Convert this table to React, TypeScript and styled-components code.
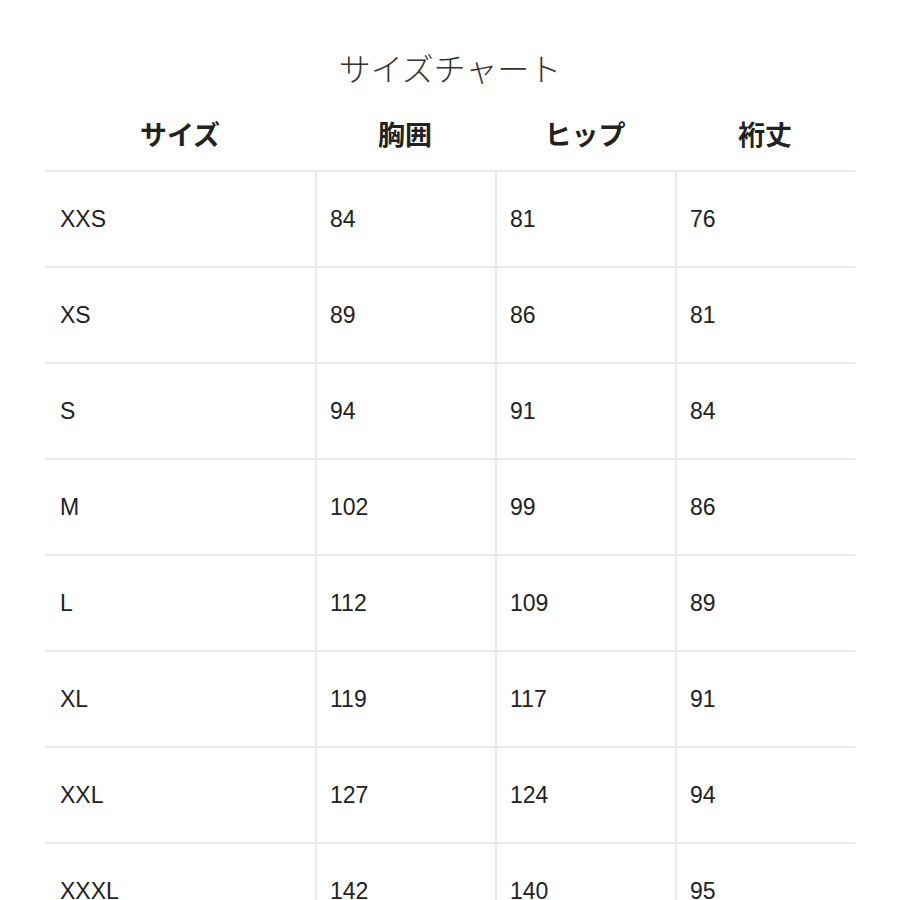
import styled, { createGlobalStyle } from 'styled-components'

const GlobalStyle = createGlobalStyle`
  html, body {
    margin: 0;
    padding: 0;
    background: #ffffff;
  }
  body {
    font-family: "Liberation Sans", "Noto Sans CJK JP", sans-serif;
    color: #222;
  }
`

const Page = styled.div`
  width: 900px;
  height: 900px;
  overflow: hidden;
  padding-top: 43px;
  box-sizing: border-box;
`

const Title = styled.h2`
  margin: 0;
  height: 48px;
  line-height: 48px;
  text-align: center;
  font-family: "Noto Sans CJK JP", sans-serif;
  font-weight: 300;
  font-size: 32px;
  color: #333;
`

const Table = styled.div`
  margin-left: 45px;
  width: 810px;
  display: grid;
  grid-template-columns: 270px 180px 180px 180px;
`

const HeadCell = styled.div`
  height: 79px;
  display: flex;
  align-items: center;
  justify-content: center;
  padding-top: 6px;
  box-sizing: border-box;
  font-family: "Noto Sans CJK JP", sans-serif;
  font-weight: 700;
  font-size: 27px;
  color: #222;
`

const Cell = styled.div<{ $first?: boolean }>`
  height: 96px;
  box-sizing: border-box;
  border-top: 2px solid #e8e8e8;
  border-left: ${(p) => (p.$first ? 'none' : '2px solid #e8e8e8')};
  display: flex;
  align-items: center;
  padding-left: ${(p) => (p.$first ? '15px' : '13px')};
  font-size: 23px;
  color: #222;
`

const headers = ['サイズ', '胸囲', 'ヒップ', '裄丈']

const rows = [
  ['XXS', '84', '81', '76'],
  ['XS', '89', '86', '81'],
  ['S', '94', '91', '84'],
  ['M', '102', '99', '86'],
  ['L', '112', '109', '89'],
  ['XL', '119', '117', '91'],
  ['XXL', '127', '124', '94'],
  ['XXXL', '142', '140', '95'],
]

function App() {
  return (
    <>
      <GlobalStyle />
      <Page>
        <Title>サイズチャート</Title>
        <Table>
          {headers.map((h) => (
            <HeadCell key={h}>{h}</HeadCell>
          ))}
          {rows.map((r) =>
            r.map((v, i) => (
              <Cell key={r[0] + i} $first={i === 0}>
                {v}
              </Cell>
            ))
          )}
        </Table>
      </Page>
    </>
  )
}

export default App
